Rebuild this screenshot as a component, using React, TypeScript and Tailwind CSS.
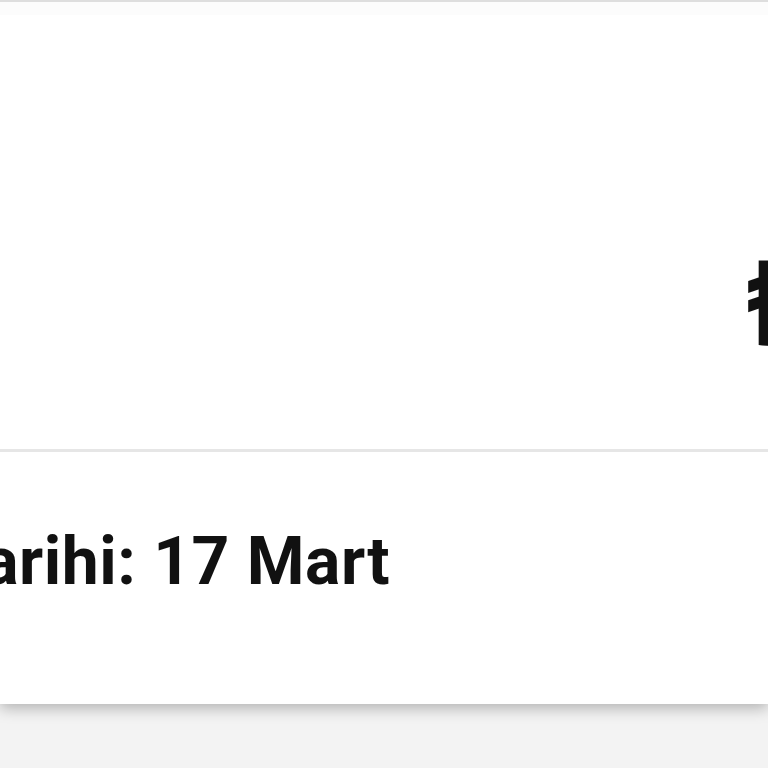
export default function App() {
  return (
    <div className="w-[768px] h-[768px] overflow-hidden bg-[#f3f3f3] font-['Roboto',_'Noto_Sans',_sans-serif] text-[#111111]">
      <div className="bg-white shadow-[0_4px_14px_rgba(0,0,0,0.28)] flex flex-col">
        <div className="h-[2px] bg-[#dedede]" />
        <div className="h-[13px] bg-[#fcfcfc]" />

        {/* price row */}
        <div className="h-[434px] flex pt-[231px]">
          <div className="ml-[746px] text-[118px] font-bold leading-none whitespace-nowrap">₺</div>
        </div>

        <div className="h-[3px] bg-[#e6e6e6]" />

        {/* delivery date */}
        <div className="h-[252px] pt-[77px]">
          <div className="w-[390px] flex justify-end">
            <span className="text-[66px] font-bold leading-none whitespace-nowrap tracking-[0.5px]">Teslim Tarihi: 17 Mart</span>
          </div>
        </div>
      </div>
    </div>
  );
}
